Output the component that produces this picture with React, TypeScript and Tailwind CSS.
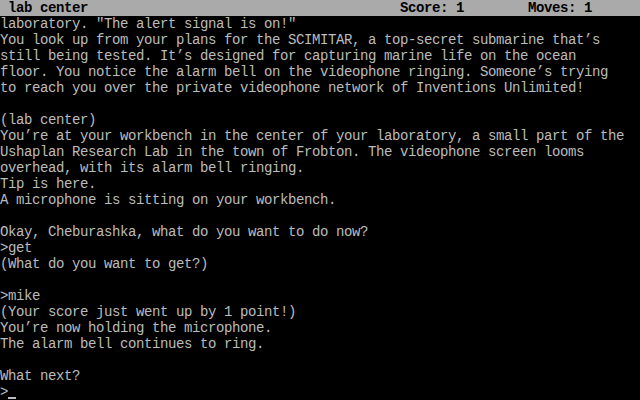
const lines: string[] = [
  'laboratory. "The alert signal is on!"',
  "You look up from your plans for the SCIMITAR, a top-secret submarine that\u2019s",
  "still being tested. It\u2019s designed for capturing marine life on the ocean",
  "floor. You notice the alarm bell on the videophone ringing. Someone\u2019s trying",
  "to reach you over the private videophone network of Inventions Unlimited!",
  "",
  "(lab center)",
  "You\u2019re at your workbench in the center of your laboratory, a small part of the",
  "Ushaplan Research Lab in the town of Frobton. The videophone screen looms",
  "overhead, with its alarm bell ringing.",
  "Tip is here.",
  "A microphone is sitting on your workbench.",
  "",
  "Okay, Cheburashka, what do you want to do now?",
  ">get",
  "(What do you want to get?)",
  "",
  ">mike",
  "(Your score just went up by 1 point!)",
  "You\u2019re now holding the microphone.",
  "The alarm bell continues to ring.",
  "",
  "What next?",
];

export default function App() {
  return (
    <div
      className="w-[640px] h-[400px] bg-black overflow-hidden text-[14px] tracking-[-0.4px] leading-[16px] text-[#bcbcbc]"
      style={{ fontFamily: '"Liberation Mono", "DejaVu Sans Mono", monospace' }}
    >
      {/* status line */}
      <div className="h-[16px] bg-[#aaaaaa] text-black font-bold flex whitespace-pre">
        <span className="w-[400px] pl-[8px]">lab center</span>
        <span className="w-[128px]">Score: 1</span>
        <span>Moves: 1</span>
      </div>

      {lines.map((line, i) => (
        <div key={i} className="h-[16px] whitespace-pre">
          {line}
        </div>
      ))}

      <div className="h-[16px] flex items-start whitespace-pre">
        <span className="w-[8px]">&gt;</span>
        <span className="w-[8px] h-[2px] mt-[13px] bg-[#bcbcbc]" />
      </div>
    </div>
  );
}
